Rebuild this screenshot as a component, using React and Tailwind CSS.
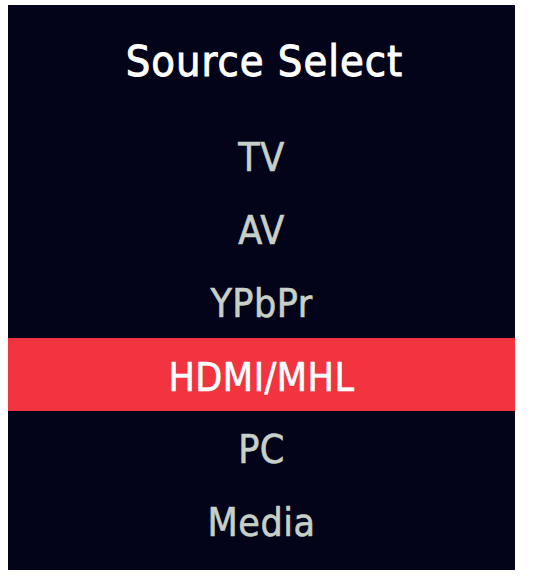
const items = ["TV", "AV", "YPbPr", "HDMI/MHL", "PC", "Media"];

export default function App() {
  return (
    <div className="w-[538px] h-[578px] bg-white pt-[5px] pl-[8px]">
      <div
        className="w-[507px] h-[565px] bg-[#03041a] flex flex-col"
        style={{ fontFamily: '"DejaVu Sans Condensed", "Liberation Sans", sans-serif' }}
      >
        <div className="h-[114px] flex items-center justify-center pb-[2px] pl-[6px]">
          <h1 className="text-[43px] leading-none text-white tracking-[1px] [-webkit-text-stroke:0.9px]">
            Source Select
          </h1>
        </div>
        {items.map((item) => (
          <div
            key={item}
            className={
              item === "HDMI/MHL"
                ? "h-[73px] flex items-center justify-center pt-[6px] bg-[#f1343f] text-white"
                : "h-[73px] flex items-center justify-center pt-[4px] text-[#c6d0c8]"
            }
          >
            <span className="text-[39px] leading-none tracking-[0.5px] [-webkit-text-stroke:0.6px]">{item}</span>
          </div>
        ))}
      </div>
    </div>
  );
}
